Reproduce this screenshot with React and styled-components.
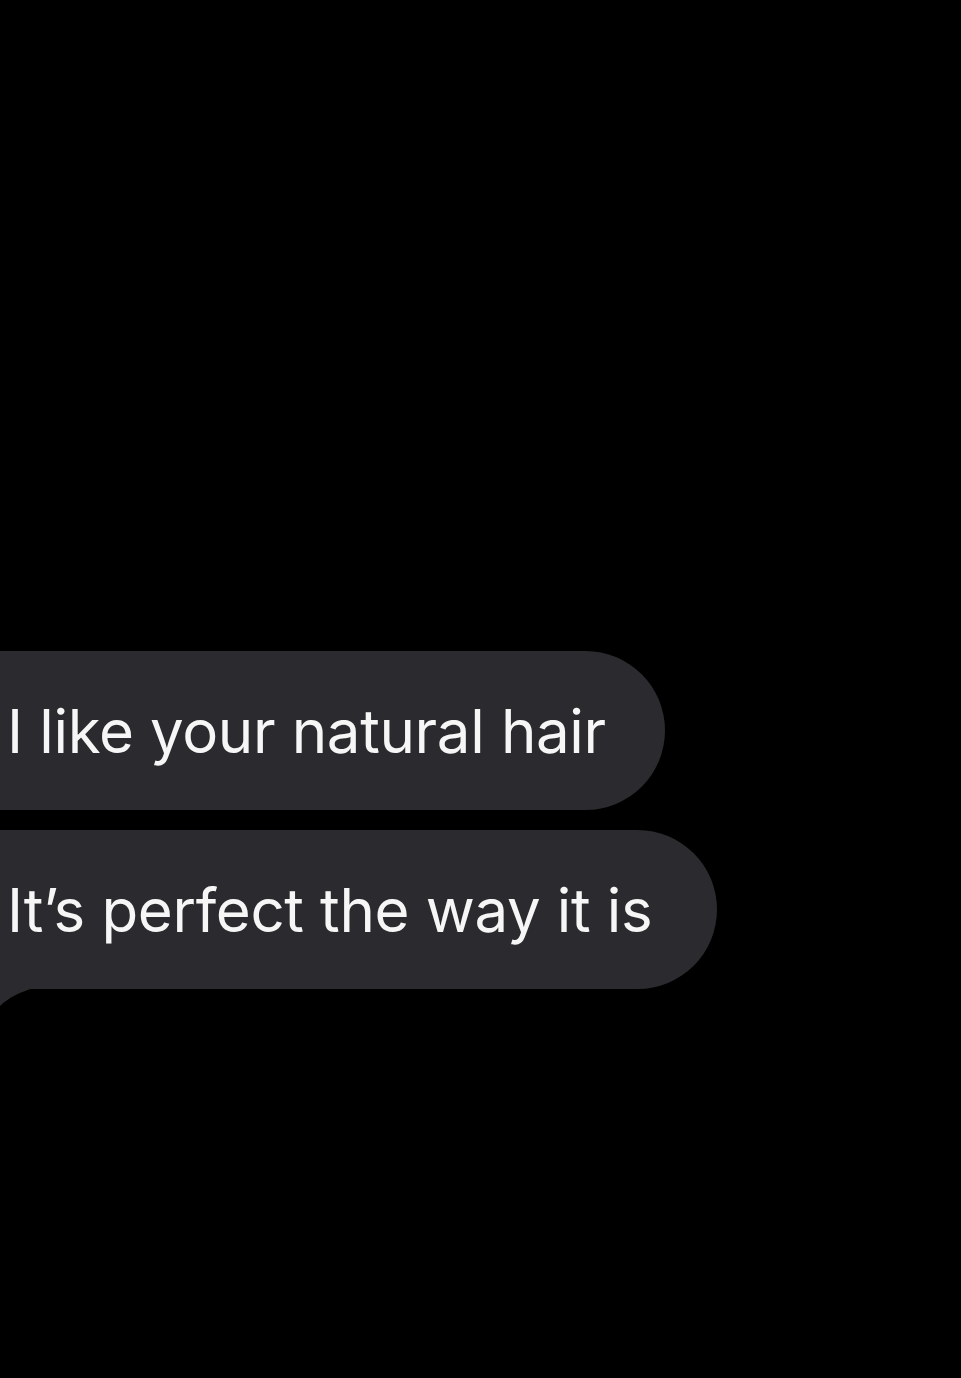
import React from 'react';
import styled, { createGlobalStyle } from 'styled-components';

const GlobalStyle = createGlobalStyle`
    html, body {
        margin: 0;
        padding: 0;
        background: #000;
    }
    body {
        font-family: Inter, 'Liberation Sans', Arial, sans-serif;
        -webkit-font-smoothing: antialiased;
    }
`;

const Screen = styled.div`
    min-height: 1378px;
    background: #000;
    overflow: hidden;
    padding-top: 651px;
    box-sizing: border-box;
`;

const Thread = styled.div`
    display: flex;
    flex-direction: column;
    align-items: flex-start;
    gap: 20px;
`;

const Bubble = styled.div`
    position: relative;
    box-sizing: border-box;
    height: 159px;
    margin-left: -80px;
    padding: 0 ${props => props.$padRight}px 0 87px;
    display: flex;
    align-items: center;
    background: #2b2b2f;
    border-radius: 80px;
    color: #f6f6f6;
    font-size: 60px;
    letter-spacing: -0.35px;
    white-space: nowrap;

    ${props => props.$tail && `
        &::after {
            content: '';
            position: absolute;
            left: 80px;
            bottom: -17px;
            width: 34px;
            height: 18px;
            background: #2b2b2f;
            clip-path: path('M0 0 L34 0 C20 4 8 10 0 18 Z');
        }
    `}
`;

const App = () => {
    return (
        <Screen>
            <GlobalStyle />
            <Thread>
                <Bubble $padRight={59}>I like your natural hair</Bubble>
                <Bubble $padRight={65} $tail>It’s perfect the way it is</Bubble>
            </Thread>
        </Screen>
    );
};

export default App;
